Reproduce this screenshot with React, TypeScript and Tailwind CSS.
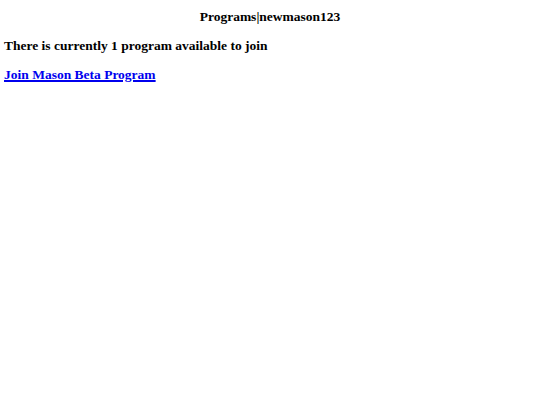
export default function App() {
  return (
    <div className="min-h-[405px] bg-white px-[4px] pt-[9px] text-black" style={{ fontFamily: '"Liberation Serif", "Times New Roman", serif' }}>
      <h1 className="text-center text-[13.5px] font-bold leading-[16px]">Programs|newmason123</h1>
      <h2 className="mt-[13px] text-[13.5px] font-bold leading-[16px]">There is currently 1 program available to join</h2>
      <div className="mt-[13px] text-[13.5px] font-bold leading-[16px]">
        <a href="#" className="text-[#0000ee] underline decoration-[1.5px]">Join Mason Beta Program</a>
      </div>
    </div>
  );
}
